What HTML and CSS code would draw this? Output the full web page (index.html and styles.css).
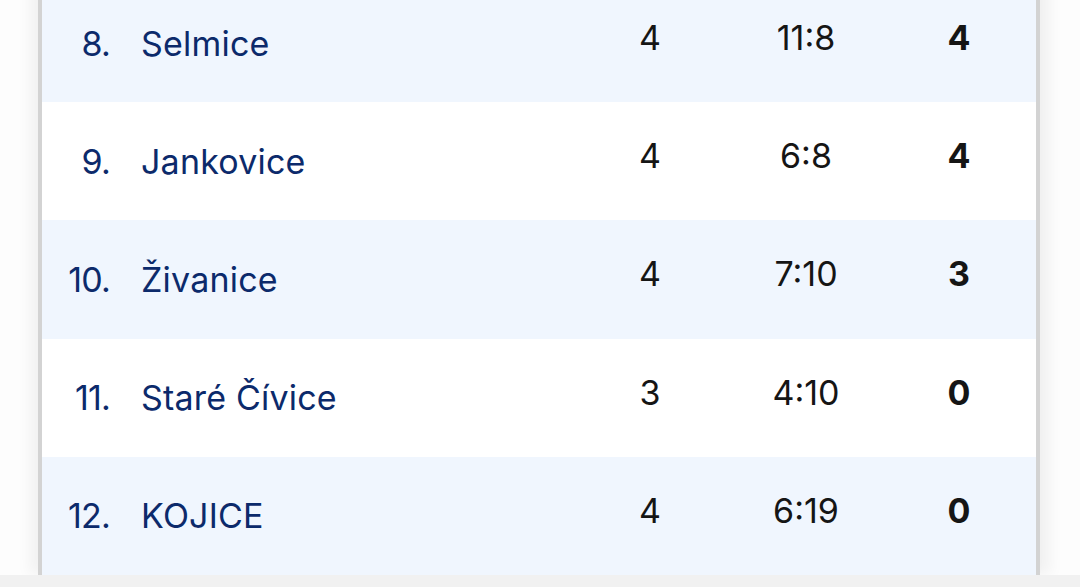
FILE: index.html
```html
<!DOCTYPE html>
<html lang="cs">
<head>
<meta charset="utf-8">
<link rel="stylesheet" href="styles.css">
<title>Tabulka</title>
</head>
<body>
<div class="page">
  <div class="card">
    <div class="row alt">
      <div class="rank">8.</div><div class="team">Selmice</div>
      <div class="stat">4</div><div class="stat">11:8</div><div class="stat pts">4</div>
    </div>
    <div class="row">
      <div class="rank">9.</div><div class="team">Jankovice</div>
      <div class="stat">4</div><div class="stat">6:8</div><div class="stat pts">4</div>
    </div>
    <div class="row alt">
      <div class="rank">10.</div><div class="team">Živanice</div>
      <div class="stat">4</div><div class="stat">7:10</div><div class="stat pts">3</div>
    </div>
    <div class="row">
      <div class="rank">11.</div><div class="team">Staré Čívice</div>
      <div class="stat">3</div><div class="stat">4:10</div><div class="stat pts">0</div>
    </div>
    <div class="row alt">
      <div class="rank">12.</div><div class="team">KOJICE</div>
      <div class="stat">4</div><div class="stat">6:19</div><div class="stat pts">0</div>
    </div>
  </div>
  <div class="footer"></div>
</div>
</body>
</html>
```
FILE: styles.css
```css
html, body {
  margin: 0;
  padding: 0;
  background: #fdfdfd;
  overflow: hidden;
}
.page {
  width: 1080px;
  height: 587px;
  display: flex;
  flex-direction: column;
  overflow: hidden;
}
.card {
  margin: -16px 0 0 38px;
  width: 1002px;
  box-sizing: border-box;
  border-left: 4px solid #d3d3d3;
  border-right: 4px solid #d3d3d3;
  box-shadow: -8px 0 14px rgba(0,0,0,0.05), 10px 0 14px rgba(0,0,0,0.05);
  background: #ffffff;
  flex: none;
}
.row {
  height: 118.2px;
  display: grid;
  grid-template-columns: 68px 1fr 156px 156px 150px;
  padding-right: 2px;
  align-items: center;
  background: #ffffff;
}
.row.alt {
  background: #f0f6fe;
}
.rank, .team {
  font-family: Inter, "Noto Sans", sans-serif;
  font-size: 34px;
  color: #0c2a6b;
  letter-spacing: 0.2px;
}
.rank {
  text-align: right;
  font-variant-numeric: proportional-nums;
  letter-spacing: -0.8px;
}
.team {
  padding-left: 31px;
  white-space: nowrap;
}
.stat {
  font-family: Inter, "Noto Sans", sans-serif;
  font-size: 34px;
  color: #151515;
  text-align: center;
  padding-bottom: 11px;
  font-variant-numeric: proportional-nums;
}
.stat.pts {
  font-weight: 700;
}
.footer {
  height: 12px;
  background: #f1f1f1;
  flex: none;
}
```
